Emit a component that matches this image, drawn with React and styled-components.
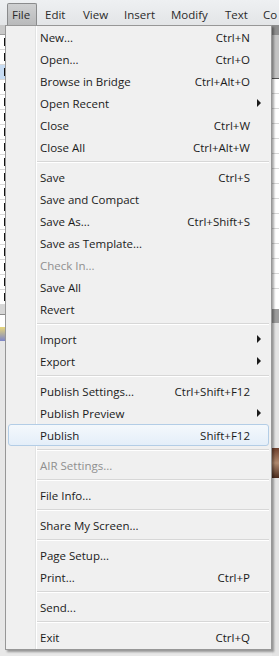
import styled, { createGlobalStyle } from "styled-components";

const GlobalStyle = createGlobalStyle`
  html, body {
    margin: 0;
    padding: 0;
    background: #e8e8e8;
  }
  * {
    box-sizing: border-box;
  }
`;

const Screen = styled.div`
  position: relative;
  width: 279px;
  height: 656px;
  overflow: hidden;
  display: flex;
  flex-direction: column;
  font-family: "Open Sans", "Noto Sans", "Liberation Sans", sans-serif;
  font-size: 11.5px;
  color: #1b1b1b;
`;

const MenuBar = styled.div`
  flex: none;
  display: flex;
  align-items: flex-end;
  height: 25px;
  padding: 3px 0 0 7px;
  background: linear-gradient(#eef0f2, #e3e5e7);
  white-space: nowrap;
  overflow: hidden;
`;

const BarItem = styled.div`
  flex: none;
  width: ${(p) => p.$w}px;
  height: 22px;
  display: flex;
  align-items: center;
  padding-left: ${(p) => (p.$active ? "4px" : "0")};
  margin-right: ${(p) => (p.$active ? "8px" : "0")};
  border: 1px solid ${(p) => (p.$active ? "#8a8b8c" : "transparent")};
  border-left-width: ${(p) => (p.$active ? "1px" : "0")};
  border-right-width: ${(p) => (p.$active ? "1px" : "0")};
  border-bottom: none;
  border-radius: 2px 2px 0 0;
  background: ${(p) => (p.$active ? "linear-gradient(#cfd0d1, #b9babb)" : "transparent")};
  color: #2a2a2a;
  font-size: 11.5px;
`;

const Workspace = styled.div`
  flex: 1;
  display: flex;
  justify-content: space-between;
`;

const Edge = styled.div`
  width: ${(p) => p.$w}px;
  display: flex;
  flex-direction: column;
`;

const Block = styled.div`
  flex: none;
  height: ${(p) => p.$h}px;
  background: ${(p) => p.$bg};
  border-bottom: ${(p) => (p.$line ? `1px solid ${p.$line}` : "none")};
`;

const ListRow = styled.div`
  flex: none;
  height: 15px;
  background: ${(p) => (p.$sel ? "#c7dcf3" : "#ffffff")};
  border-bottom: 1px solid #d8d8d8;
  display: flex;
  justify-content: ${(p) => (p.$side === "left" ? "flex-end" : "flex-start")};
  align-items: center;
`;

const Tick = styled.span`
  width: 2px;
  height: 8px;
  background: #111;
`;

const Menu = styled.div`
  position: absolute;
  left: 5px;
  top: 25px;
  width: 267px;
  padding: 0 2px 1px 2px;
  background: #f0f0f0;
  border: 1px solid #979797;
  box-shadow: 2px 2px 2px rgba(0, 0, 0, 0.35);

  &::before {
    content: "";
    position: absolute;
    top: 0;
    bottom: 0;
    left: 29px;
    width: 2px;
    background: linear-gradient(to right, #e2e3e3 0 1px, #ffffff 1px 2px);
  }
`;

const Item = styled.div`
  position: relative;
  height: 22px;
  display: grid;
  grid-template-columns: 1fr auto 18px;
  align-items: center;
  padding-left: 31px;
  border: 1px solid ${(p) => (p.$hover ? "#b3cde6" : "transparent")};
  border-radius: 3px;
  background: ${(p) => (p.$hover ? "linear-gradient(#f4f8fc, #e4eef9)" : "transparent")};
  color: ${(p) => (p.$disabled ? "#8f8f8f" : "#1b1b1b")};
  white-space: nowrap;
  z-index: 1;
`;

const Shortcut = styled.span`
  text-align: right;
`;

const Arrow = styled.span`
  justify-self: end;
  margin-right: 7px;
  width: 0;
  height: 0;
  border-top: 4px solid transparent;
  border-bottom: 4px solid transparent;
  border-left: 4px solid #1b1b1b;
`;

const Separator = styled.div`
  position: relative;
  height: 8px;
  margin-left: 29px;
  display: flex;
  align-items: center;
  z-index: 1;

  &::after {
    content: "";
    flex: 1;
    height: 2px;
    background: linear-gradient(#d7d7d7 0 1px, #ffffff 1px 2px);
  }
`;

const barItems = [
  { label: "File", w: 30, active: true },
  { label: "Edit", w: 38 },
  { label: "View", w: 41 },
  { label: "Insert", w: 47 },
  { label: "Modify", w: 54 },
  { label: "Text", w: 38 },
  { label: "Co", w: 16 },
];

const menuItems = [
  { label: "New...", key: "Ctrl+N" },
  { label: "Open...", key: "Ctrl+O" },
  { label: "Browse in Bridge", key: "Ctrl+Alt+O" },
  { label: "Open Recent", sub: true },
  { label: "Close", key: "Ctrl+W" },
  { label: "Close All", key: "Ctrl+Alt+W" },
  "-",
  { label: "Save", key: "Ctrl+S" },
  { label: "Save and Compact" },
  { label: "Save As...", key: "Ctrl+Shift+S" },
  { label: "Save as Template..." },
  { label: "Check In...", disabled: true },
  { label: "Save All" },
  { label: "Revert" },
  "-",
  { label: "Import", sub: true },
  { label: "Export", sub: true },
  "-",
  { label: "Publish Settings...", key: "Ctrl+Shift+F12" },
  { label: "Publish Preview", sub: true },
  { label: "Publish", key: "Shift+F12", hover: true },
  "-",
  { label: "AIR Settings...", disabled: true },
  "-",
  { label: "File Info..." },
  "-",
  { label: "Share My Screen..." },
  "-",
  { label: "Page Setup..." },
  { label: "Print...", key: "Ctrl+P" },
  "-",
  { label: "Send..." },
  "-",
  { label: "Exit", key: "Ctrl+Q" },
];

const listRows = Array.from({ length: 18 }, (_, i) => i);

export default function App() {
  return (
    <>
      <GlobalStyle />
      <Screen>
        <MenuBar>
          {barItems.map((b) => (
            <BarItem key={b.label} $active={b.active} $w={b.w}>
              {b.label}
            </BarItem>
          ))}
        </MenuBar>

        <Workspace>
          <Edge $w={6}>
            <Block $h={10} $bg="#c9c9c9" $line="#9c9c9c" />
            {listRows.map((i) => (
              <ListRow key={i} $side="left" $sel={i === 2}>
                <Tick />
              </ListRow>
            ))}
            <Block $h={10} $bg="#d6d6d6" $line="#8c8c8c" />
            <Block $h={12} $bg="#ffffff" />
            <Block $h={14} $bg="linear-gradient(#e8d77a, #7d86c8)" />
            <Block $h={300} $bg="#e7e7e7" />
          </Edge>
          <Edge $w={7}>
            <Block $h={10} $bg="#8e8e8e" />
            <Block $h={44} $bg="#c4c4c4" $line="#555" />
            {listRows.slice(0, 14).map((i) => (
              <ListRow key={i} $side="right" />
            ))}
            <Block $h={20} $bg="#ffffff" />
            <Block $h={14} $bg="#9c9c9c" />
            <Block $h={125} $bg="#e4e4e4" />
            <Block $h={30} $bg="linear-gradient(#6e3f2c, #b08a70, #4a2a1c)" />
            <Block $h={200} $bg="#e4e4e4" />
          </Edge>
        </Workspace>

        <Menu>
          {menuItems.map((m, i) =>
            m === "-" ? (
              <Separator key={i} />
            ) : (
              <Item key={i} $hover={m.hover} $disabled={m.disabled}>
                <span>{m.label}</span>
                <Shortcut>{m.key}</Shortcut>
                {m.sub ? <Arrow /> : <span />}
              </Item>
            )
          )}
        </Menu>
      </Screen>
    </>
  );
}
